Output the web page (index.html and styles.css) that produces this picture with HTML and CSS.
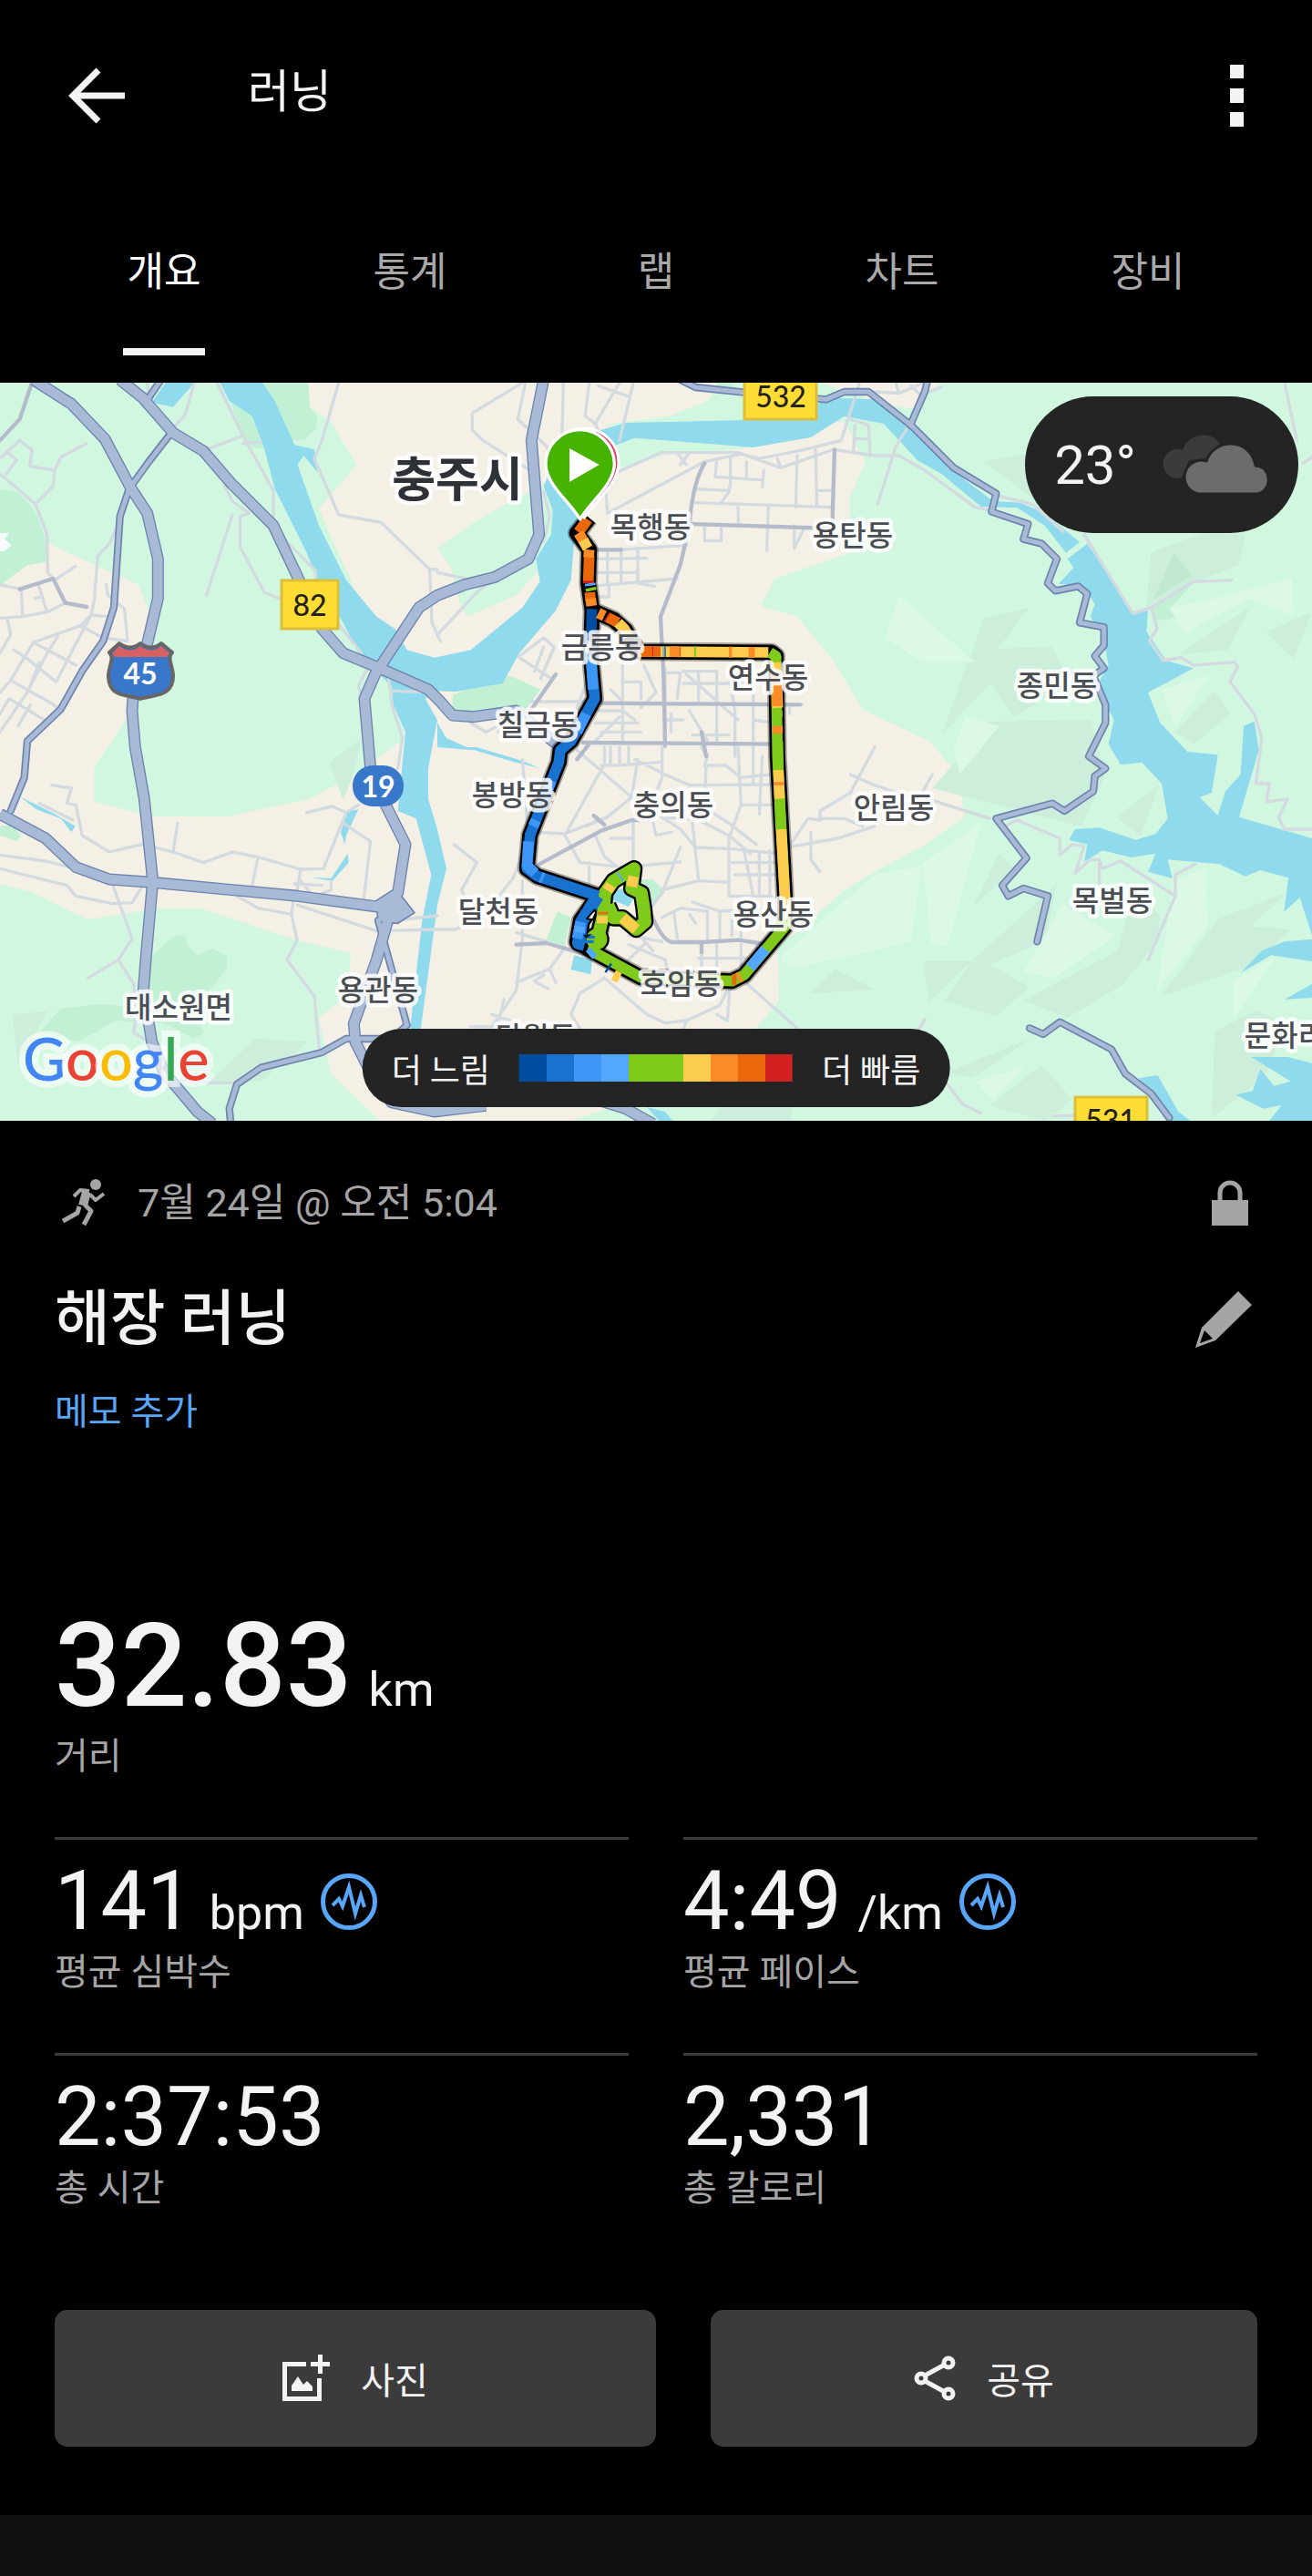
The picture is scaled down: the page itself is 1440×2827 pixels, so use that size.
FILE: index.html
```html
<!DOCTYPE html>
<html lang="ko">
<head>
  <meta charset="UTF-8">
  <title>러닝</title>
  <meta name="viewport" content="width=device-width,initial-scale=1">
  <link rel="stylesheet" href="styles.css">
</head>
<body>
  <header class="topbar">
    <button class="icon-btn" aria-label="뒤로">
      <svg width="62" height="62" viewBox="0 0 62 62" fill="none" stroke="#f3f3f3" stroke-width="7"><path d="M33 3 5 31l28 28M5 31h57"/></svg>
    </button>
    <h1>러닝</h1>
    <button class="icon-btn" aria-label="메뉴">
      <svg width="15" height="68" viewBox="0 0 15 68" fill="#f3f3f3"><path d="M0 0h15v15H0zM0 26h15v16H0zM0 52h15v16H0z"/></svg>
    </button>
  </header>

  <nav class="tabs">
    <a href="#overview" class="tab active">개요</a>
    <a href="#stats" class="tab">통계</a>
    <a href="#laps" class="tab">랩</a>
    <a href="#charts" class="tab">차트</a>
    <a href="#gear" class="tab">장비</a>
  </nav>

  <section class="map">
    <svg class="map-canvas" viewBox="0 0 1440 810" role="img" aria-label="러닝 코스 지도">
      <g transform="scale(.33333)">
        <!-- land -->
        <g fill="#d2f7e1">
          <path d="M0 0H1015L1020 80 1090 130 1175 270 1050 415 1150 640 1300 1000 1335 1170 1160 1295 1020 1370 750 1428H500L310 1380V1265L355 1200 440 1070 490 1000V750L455 665 150 525V590L90 600 0 670z"/>
          <path d="M0 1650 100 1675 290 1767 520 1730H660L960 1830 1155 1878 1145 2020 1050 2090 1090 2275 1250 2430H0z"/>
          <path d="M1440 545 1560 460 1700 380 1800 330 1850 500 1780 610 1700 700 1540 770 1515 730 1485 610z"/>
          <path d="M1455 975 1560 905 1590 945 1550 980z"/>
          <path d="M1980 140 2200 110 2330 60 2370 0H2700L2880 60 2840 130 2600 130 2040 140z"/>
          <path d="M1990 220 2090 182 2480 213 2400 222 2200 235 2050 285z"/>
          <path d="M3090 0H4320V2430H1880L2000 2390 2490 2125 2565 2035 2560 1840 2610 1820 2780 1670 2880 1610 3040 1525 3175 1430 3160 1300 3090 1215 3060 1180 2880 1095 2840 1075 2740 910 2625 770 2505 735 2550 645 2800 560 2797 380 2850 260 2780 130 2880 70 3010 85z"/>
        </g>
        <g fill="#c2f0d5">
          <path d="M865 0H1015L1020 80 1045 110 1040 150 1000 190 960 190 900 60z"/>
          <path d="M760 65 830 110 870 215 830 215 790 150z"/>
          <path d="M0 350 60 360 120 430 155 530 150 590 90 600 0 665z"/>
          <path d="M0 1460 40 1455 70 1490 55 1510 0 1490z"/>
          <path d="M500 1890 540 1850 580 1818 610 1822 615 1850 650 1885 700 1862 750 1890 745 1930 700 1990 640 2030 670 2140 640 2160 540 2110 380 2100 260 2170 130 2140 200 2060 330 2045 480 2060z"/>
          <path d="M1490 1030 1600 980 1680 965 1780 1010 1720 1090 1560 1080 1490 1080z"/>
          <path d="M1835 1740 1880 1760 1860 1855 1798 1835z"/>
          <path d="M2110 1635H2150L2185 1670 2145 1720 2110 1700z"/>
          <path d="M3485 1210 3545 1210 3640 1250 3600 1305 3485 1265z"/>
          <path d="M3790 740 3930 660 3855 740 3870 775 3800 785z"/>
          <path d="M2360 0H2410L2415 20 2360 20z"/>
        </g>
        <path fill="#f8fbfb" d="M0 495 30 495 15 515 38 535 12 555H0z"/>
        <!-- relief -->
        <g fill="#cceedb">
          <path d="M3240 775 3390 740 3285 875 3465 870 3520 990 3340 1100 3260 990 3100 1160z"/>
          <path d="M3790 560 3960 495 4100 500 4080 600 3900 670 3775 740z"/>
          <path d="M3880 895 4115 740 4045 880zM4170 820 4320 755 4260 910zM3870 1150 4000 1015 4050 1090 3930 1190z"/>
          <path d="M3240 260 3375 235 3400 380zM3070 1335 3260 1115 3590 1110 3640 1290 3560 1460 3400 1420z"/>
          <path d="M3675 1430 3820 1320 3755 1495zM3205 1725 3290 1550 3340 1600z"/>
          <path d="M3040 1905H3200L3480 1650 3440 1840 3260 1915 3390 1990 3280 2085 3110 2035 3200 1905 3060 2040z"/>
          <path d="M3370 2035 3680 1870 3730 1690 3820 1750 3815 1830 3700 1980 3515 2090z"/>
          <path d="M3825 2020 4010 1765 4235 1680 4120 1790 4250 1800 4120 1920z"/>
          <path d="M4000 2135 4140 2065 4240 2120 4160 2290 3990 2420zM3120 2270 3400 2155 3200 2290zM3260 2380 3430 2245 3530 2360 3440 2430z"/>
          <path d="M2670 2010 2750 1930 2880 1998zM40 2080 155 2070 60 2250zM690 2300 840 2160 1015 2170 860 2300z"/>
          <path d="M1085 1250 1190 1170 1160 1300 1130 1375z"/>
        </g>
        <g fill="#dcf9e7">
          <path d="M2960 700 3210 920H3040L2915 840zM3850 740 4000 710 4255 645 4260 770 4115 710 3900 825zM3825 1010 3980 965 3870 1130z"/>
          <path d="M3040 1580 3230 1450 3120 1855 3065 1845zM2880 1620 3035 1590 3000 1840 2880 1870zM3370 1940 3500 1720 3675 1820 3470 1960z"/>
          <path d="M3865 1640 3970 1595 3975 1795 3810 2000zM4060 1970 4200 1890 4060 2100zM3210 2300 3380 2250 3270 2360zM3140 1200 3180 1100 3290 1130 3160 1290zM2570 1890 2880 1620 2880 1870 2600 1930z"/>
        </g>
        <path fill="#c2e7d2" d="M3865 560 3925 635 3800 710z"/>
        <path fill="#cdeedd" d="M2340 2430 2390 2360H2620L2600 2430z"/>
        <!-- water -->
        <g fill="#8fdaed">
          <path d="M725 0H865L905 60 970 205 1035 220 1045 295 1000 240 980 270 1050 470 1140 650 1240 770 1300 810 1340 880 1430 905 1550 880 1720 740 1778 655 1765 580 1815 500 1820 420 1790 340 1850 210 1980 155 2060 132 2360 125 2570 120 2740 50 2880 55 2990 140 3130 285 3270 390 3360 395 3440 430 3555 525 3510 560 3440 470 3350 412 3230 408 3100 300 3020 255 2910 135 2780 110 2670 180 2480 213 2090 182 1990 220 1920 330 1890 530 1880 650 1830 750 1710 890 1655 990 1500 1017 1440 1015 1400 1040 1440 1110 1410 1270 1410 1370 1440 1470 1470 1600 1440 1720 1385 2130H1350L1390 1770 1420 1620 1370 1435 1310 1410 1335 1150 1295 1060 1290 1000 1180 890 1130 790 1060 690 1010 560 905 350 870 215 830 110 755 60z"/>
          <path d="M545 0H640L570 80 500 65zM65 1362 180 1420 248 1460 235 1480 200 1435 120 1405zM1145 1410 1180 1405 1140 1490 1135 1520 1122 1480zM1145 1550 1148 1580 1095 1640 1020 1628 1090 1632z"/>
          <path d="M1530 1200H1570L1720 1245 1775 1268 1690 1248zM1440 1120 1470 1170 1560 1210 1440 1200z"/>
          <path d="M1890 1885 1950 1900 1945 1948 1880 1932zM2015 1680 2060 1660 2090 1690 2070 1725 2020 1705z"/>
          <path d="M3515 580 3580 530 3670 660 3730 760 3780 750 3775 820 3840 915 3930 940 3780 1020 3820 1120 3910 1215 4010 1225 3990 1350 3950 1365 4010 1425 4035 1345 4085 1290 4095 1130 4130 1115 4145 1210 4080 1430 4320 1500V1820L4280 1695 4228 1742 4242 1630 4150 1605 4100 1625 4015 1585 3845 1570 3860 1632 3780 1610 3805 1550 3725 1563 3630 1540 3570 1577 3580 1520 3520 1505 3540 1470 3620 1465 3740 1505 3805 1485 3845 1435 3825 1320 3760 1250 3690 1258 3650 1190 3668 1110 3610 1000 3650 930 3630 830 3590 770 3605 730 3570 670 3485 662 3535 610z"/>
          <path d="M4083 1945 4155 1870 4230 1840 4320 1832V1905L4185 1885zM4120 2220H4240L4320 2240V2430H4180L4220 2378 4160 2390 4070 2345 4125 2330 4150 2260 4195 2315 4250 2300zM3750 2290 3812 2280 3880 2400 3920 2430H3840zM4230 2030 4320 1980V2025zM2130 2385 2190 2400 2215 2430H2170z"/>
        </g>
        <!-- local streets -->
        <g class="street">
          <path d="M0 250 65 190 105 220 98 275 180 288 200 245 285 200M180 288 175 340 117 400 155 500 157 625 180 650 248 605M0 300 117 400M20 225 55 255 20 300M0 665 70 680 75 770 155 755 215 725M0 775 75 770M125 660 155 755M115 710 135 705M25 780 35 830 0 890"/>
          <path d="M45 880 85 905 185 985M110 855 265 800 300 765 355 770M110 855 35 980 0 1020M110 855 250 930M265 800 340 840 420 850 410 745 355 700 350 665M300 765 310 720 322 570 360 530 420 390M35 980 160 1050 205 1080M90 1020 150 900 190 835M185 985 265 830 300 765M0 1090 30 1040 145 1110M60 1130 100 1060M130 920 90 1020 0 1150"/>
          <path d="M640 0 610 105 570 150M715 0 800 175 900 355V470M800 175 680 220M800 200 860 195M1115 0 1060 190 1035 250 1115 435 1255 460 1415 615H1440M740 340 765 390 820 430 790 440V540L870 690 930 715M765 435 680 700M485 0 490 60M1415 615 1422 790 1450 850M910 490 1040 620V700L1190 890"/>
          <path d="M1210 940 1180 1000 1200 1050M1280 970 1290 1060 1325 1170 1310 1270M1295 1015 1440 1020M0 1555 150 1575 230 1595M0 1600 220 1655 250 1690 370 1715 435 1712 470 1655M170 1325 235 1335 220 1385 250 1390 270 1490 360 1545 470 1520 570 1545 670 1580 765 1545 850 1562 990 1602 1065 1600 1140 1415 1180 1390M570 1545 585 1450M850 1562 828 1665M990 1602 975 1690M1130 1450 1220 1510 1198 1700M1010 1415 1095 1395 1140 1415M130 1385 240 1440"/>
          <path d="M370 1650 435 1830 390 1900 290 1960M390 1900 440 1980 450 2080 440 2140 500 2175 520 2210M780 1690 850 1730 960 1750 978 1835 945 1900 1035 2020 1052 2200M965 1710 960 1750M980 1720 1240 1805 1440 1800M1300 1770 1440 1755M600 2295 700 2305 770 2305M970 1650 1060 1655M990 1640 1030 1690M1040 1690 1090 1670V1640"/>
          <path d="M1720 0 1555 100V155L1590 190 1740 285M1730 0 1705 120 1800 210 1860 330M1855 0 1850 200M1940 0 1927 110 1960 135 2040 0M1970 10 2070 45M2085 0 2040 190M1960 135 1980 180 2000 420M2000 310 2175 230H2430L2570 280 2745 220 2880 240M2000 430 2320 260 2440 235 2500 250 2650 220 2770 190 2830 0M2230 230 2260 270M2240 270 2270 230"/>
          <path d="M2800 120 2860 140 2865 240M2815 140 2810 230M2820 185H2860M2360 250 2355 310 2510 320M2405 250V330L2400 360 2375 395M2458 260V315M2560 250 2570 280M2625 240 2620 410M2685 220 2690 410M2290 350 2400 355M2290 395 2740 410M2515 290 2510 345M2430 410 2432 470M2530 410 2525 550M2615 470V545L2650 475M2690 355H2740M2320 470V520H2375V480"/>
          <path d="M1970 550H2040L2260 535M1970 580 2130 578M1970 625H2100M1970 668 2230 645M2000 560V660M2045 545V660M2100 545V660L2155 670M1970 705H2005V660M1440 830 1580 680 1680 610 1790 520 1810 440 1790 360M1440 625 1560 650"/>
          <path d="M1710 900 1790 840 1825 870 1780 975M1710 905 1810 970M1760 950 1790 870M1750 1050H1950M1940 960 1890 1100 1840 1170M1550 1120 1600 1150 1640 1130M1640 1150 1680 1080M2050 930V1190M2050 985H2110V1040M2120 930 2160 1020 2110 1070M2190 940V1200M2190 955H2240L2230 1040M2250 950H2360V1180M2250 990H2520M2300 950V1050M2400 960 2420 1080V1230M2260 960 2430 1110M2480 970V1180M2190 1110H2250M2210 1090V1150M2010 1010 2050 1050M1970 1080H2050L2090 1110M1960 1120H2100M1980 1150H2110M1960 1180 2040 1100M2270 1080 2330 1180M2280 1160H2400M2540 1060H2640M2600 1060V1090M2480 1110 2550 1120"/>
          <path d="M1980 1260 2030 1260 2170 1250M1990 1200V1250M2010 1200V1250M2040 1200V1250M2070 1200V1250M1900 1210 2080 1365 2240 1470 2290 1530 2410 1535 2560 1550M2100 1240 2080 1365 2000 1430 1930 1460M1985 1265 1860 1490 1910 1580 2050 1595 2240 1578M2090 1240 2190 1290 2270 1325 2540 1323M2180 1200V1300L2130 1430 2085 1440V1600M1770 1480 1860 1485 2000 1430M1960 1490 1990 1560 2040 1600M2010 1500H2085M1940 1580V1700M2140 1400 2160 1490 2210 1480M2180 1430 2300 1440 2400 1490 2470 1550M2320 1260H2390L2440 1300 2540 1290M2320 1260 2330 1230 2310 1200M2325 1260 2320 1400 2400 1450 2490 1520M2430 1200 2440 1390 2400 1500V1690M2440 1390H2540M2480 1200V1320M2510 1230 2500 1420M2280 1450 2300 1640 2180 1670M2240 1530 2180 1680 2120 1760"/>
          <path d="M2300 1640 2400 1645M2410 1580H2570M2420 1620H2570M2450 1540 2480 1690M2500 1550V1680M2535 1540V1690M2400 1690H2540M2280 1710 2370 1740 2500 1735M2330 1740V1840M2370 1740V1830M2220 1750 2230 1830M2180 1760 2240 1730 2330 1740M2270 1750 2290 1780M2410 1740V1820M2440 1740V1830M2300 1895H2490M2310 1870V1930M2360 1850V1930M2440 1850V1930M2490 1850V1930M2070 1850 2190 1900 2200 1950M2120 1850 2050 1920M2090 1800 2150 1870M2070 1820 2180 1840"/>
          <path d="M1495 1520 1570 1580 1520 1670 1540 1720M1440 1800 1500 1800 1590 1760 1690 1630 1740 1500 1720 1240M1720 1640V1830L1700 2000 1620 2120M1700 1810 1800 1840M1860 1860 1810 1930 1700 1975M1810 1930 1830 1975M1765 1975 1805 1995M1790 1950 1760 1970M1620 2080 1680 2100M1660 2030 1640 2110M1550 2120H1650M1990 1960 1910 2010 1880 2080 1920 2140M1990 1960 2130 2080 2190 2108 2260 2100 2370 2050 2410 1970M2260 2100 2250 2130M2405 1970 2395 2100 2360 2080M2450 1970 2630 2130M2590 1530 2760 1500 2880 1460M2670 1480V1570L2700 1610M2880 1200 2800 1350 2700 1410V1440L2660 1435 2590 1540M2700 1435H2780L2840 1460M2800 1290 2880 1325"/>
          <path d="M2880 30 2960 35 3040 0M2950 0 2960 35M3000 10 3030 40 3100 15M2880 240 2960 240 3040 285 3210 410 3265 420M2990 145 2950 210 2890 400M3280 370 3400 400 3500 490M3570 500 3730 760 3790 740 3930 655 4055 650M3790 740 3810 810 3785 850 3830 915 3890 905 3930 930 4065 920 4075 935 4050 985 4130 1090 4155 1170 4135 1320 4180 1320 4170 1380 4240 1370 4210 1430 4230 1470H4320M4230 0 4270 190M4290 265 4320 245"/>
          <path d="M2880 1325 2980 1360 3070 1375 3260 1435M3070 1290 3030 1360M3300 1465 3350 1440 3490 1500V1555L3530 1520 3570 1525 3540 1615 3590 1570 3620 1570 3630 1600 3690 1575 3870 1690V1620L3935 1585M3620 1570V1650M3870 1690 3780 1900M3045 2095 3020 2140M3120 2310 3170 2375 3230 2405M3470 2415 3600 2410"/>
        </g>
        <g class="avenue">
          <path d="M2320 265Q2280 330 2270 470L2240 600 2175 770 2185 960 2190 1195M2280 465 2740 480 2748 220M1970 1055 2635 1060M1920 1185 2570 1190M1740 1090 1830 960M1960 550H2045"/>
          <path d="M1720 1615 1980 1475 2080 1440H2140M1990 1455 1955 1425M1700 1850 1800 1845 1920 1880M2140 1740Q2180 1840 2215 1842H2310L2430 1835 2500 1845M2310 1842V1875M2310 1150 2325 1230M1900 1240 1940 1190"/>
          <path d="M65 680 175 645 215 725 285 738M0 190 65 120 105 0"/>
        </g>
        <!-- highways: casing first, fill above -->
        <defs>
          <g id="trunk">
            <path d="M110 -10 235 70 345 185 430 345 485 430 520 580V710L480 880 440 1010 435 1080 445 1200 475 1370 503 1640 480 1900 472 2000 500 2170 540 2270 650 2400 700 2440"/>
            <path d="M395 -10 470 50 570 165 670 225 760 330 900 470 985 650 1060 810 1130 890 1250 940 1410 1010 1450 1050 1490 1095 1560 1100 1700 1080 1770 1140 1840 1195"/>
            <path d="M0 1420 150 1500 250 1595 360 1635 500 1645 980 1690 1240 1725 1310 1680 1335 1520 1270 1390 1220 1270 1200 1040 1235 960 1380 740 1440 700 1530 665 1630 640 1740 580 1775 500 1750 190 1790 -10"/>
            <path d="M1280 1760 1240 1900 1165 2110 1170 2170 1220 2270 1290 2370 1430 2400 1600 2380M1900 2340 2060 2390 2150 2440"/>
          </g>
          <g id="primary">
            <path d="M530 -10 490 50M560 170 490 260 425 350 395 440 375 740 340 850 270 950 200 1075 90 1180 80 1300 35 1410"/>
            <path d="M1245 1770 1340 2115 1290 2160H1140L1060 2205 860 2255 780 2310 755 2390 760 2440M3055 -10 3045 30 2997 140"/>
            <path d="M2240 -10 2290 15 2480 35 2720 55 2780 30H2860L3000 140 3140 280 3280 365 3265 425 3385 465 3370 515 3430 530 3480 580 3450 660 3475 685 3550 670 3580 695 3555 790 3635 805V865L3605 900 3635 940 3600 965 3640 1060V1120L3585 1230 3640 1270 3605 1295 3600 1345 3505 1410 3465 1385 3280 1435 3380 1565 3300 1655 3320 1690 3370 1665 3450 1690 3415 1840"/>
            <path d="M3390 2125 3435 2145 3490 2105 3660 2195 3705 2275 3790 2340 3850 2420"/>
          </g>
        </defs>
        <use href="#primary" class="primary-casing"/>
        <use href="#trunk" class="trunk-casing"/>
        <path d="M1240 1720 1310 1675 1365 1745 1310 1780 1245 1775z" fill="#a8bad6" stroke="#6c84ad" stroke-width="5"/>
        <use href="#primary" class="primary"/>
        <use href="#trunk" class="trunk"/>

        <!-- running course, coloured by pace -->
        <defs>
          <path id="course" d="M1940 445 1900 495 1940 550 1937 660 1950 750 1945 900 1958 1040 1880 1180 1845 1210 1840 1250 1745 1490 1735 1600 1770 1625 1970 1690 1912 1770 1900 1840 1950 1872 2110 1958 2410 1970 2450 1950 2585 1790V1700L2560 1230 2555 900 2540 888 2100 885 2060 815 2020 780 1950 750M1950 1872 1970 1825 1985 1760 1990 1680"/>
          <path id="lake-loop" d="M1970 1820 1985 1760 1992 1680 2020 1640 2088 1600 2080 1665 2112 1680 2120 1730 2124 1775 2095 1800 2050 1762 2020 1762 2002 1720"/>
          <path id="south-loop" d="M1968 1690 1915 1775 1905 1845 1925 1850"/>
        </defs>
        <use href="#course" class="course-shadow"/>
        <use href="#course" class="course-shadow dark"/>
        <use href="#lake-loop" class="course-shadow dark wide"/>
        <use href="#south-loop" class="course-shadow dark wide"/>
        <circle cx="1965" cy="1832" r="38" fill="#80ca1c" stroke="#000" stroke-width="7"/>
        <g class="pace">
          <path stroke="#80ca1c" d="M1950 1872 2110 1958 2410 1970 2450 1950 2585 1790V1700L2560 1230 2555 900M1950 1872 1970 1825"/>
          <use href="#lake-loop" stroke="#80ca1c" class="loop"/>
          <path stroke="#1872d0" d="M1945 900 1958 1040 1880 1180 1845 1210 1840 1250 1745 1490 1735 1600 1770 1625 1970 1690"/>
          <use href="#south-loop" stroke="#1872d0" class="loop"/>
          <path stroke="#004c9e" d="M1949 745 1945 900"/>
          <path stroke="#3d96f5" d="M1946 905 1953 1010M1930 1090 1900 1150M1815 1310 1805 1335M1765 1440 1755 1460M1740 1510 1735 1590 1762 1615M1912 1775 1900 1830M1790 1632 1780 1628"/>
          <path stroke="#54a7ff" d="M1910 1790 1908 1810M2520 1865 2470 1925M1955 1872 1940 1885"/>
          <path stroke="#ea670c" d="M1935 450 1905 492M1940 570 1937 655M1942 690 1945 720M2035 790 2000 772"/>
          <path stroke="#fa8b26" d="M1905 495 1922 522M1940 550 1938 575M1945 710 1948 735M1970 758 1990 768"/>
          <path stroke="#fbcc4d" d="M1920 518 1935 545M2035 790 2055 810 2070 835M2100 885 2530 888M2555 920 2561 1070M2563 1275 2567 1370M2572 1470 2585 1700 2586 1740M2050 1762 2095 1800M2020 1950 2040 1960M1983 1755V1780M2086 1625 2080 1660M2000 1672 2012 1654"/>
          <path stroke="#ea670c" d="M2100 885H2175M1985 1742V1750M2410 1965 2425 1965"/>
          <path stroke="#fa8b26" d="M2205 885 2240 886M2400 887H2410M2465 888H2485M2556 955 2558 1065M2560 1130V1155M2565 1315V1325M2430 1960 2440 1955"/>
          <path stroke="#80ca1c" d="M2286 886H2292M2535 888 2555 900 2555 905M2559 1080V1100M2561 1180 2563 1275M2567 1370 2571 1470M1945 675 1947 685M2585 1770 2560 1810"/>
          <path stroke="#d42020" d="M2148 885H2151M2238 885H2240M1938 652V660M1998 770 2001 772"/>
          <path stroke="#54a7ff" d="M1943 660 1944 668M2040 1628 2045 1625M2182 885H2186"/>
          <path stroke="#004c9e" d="M2000 1925 2006 1929M2188 886H2192"/>
          <path stroke="#1872d0" stroke-width="10" d="M1935 1825H1958M1925 1840H1955"/>
        </g>
        <path d="M1932 1765 1958 1735 1962 1745 1952 1768z" fill="#f4f0e5" stroke="#000" stroke-width="6"/>
        <path d="M1920 1818 1950 1815 1930 1830z" fill="#071a33"/>

        <!-- finish pin under start pin -->
        <path d="M1924 445C1894 395 1811 335 1811 263a113 113 0 0 1 226 0c0 72-83 132-113 182z" fill="#e8365d" stroke="#fff" stroke-width="9"/>
        <path d="M1910 450C1880 395 1797 335 1797 268a113 113 0 0 1 226 0c0 67-83 127-113 182z" fill="#45b300" stroke="#fff" stroke-width="10"/>
        <path d="M1875 216 1973 270 1875 327z" fill="#fff"/>
      </g>

      <g class="road-sign">
        <rect x="309" y="217" width="62" height="53"/>
        <rect x="817" y="-12" width="79" height="52"/>
        <rect x="1180" y="784" width="79" height="52"/>
        <text x="340" y="243">82</text>
        <text x="857" y="14">532</text>
        <text x="1219" y="808">531</text>
      </g>
      <path d="M120 296 131 286q12 9 23 0 12 9 23 0l12 10c-8 8 6 20-1 36-6 13-24 11-34 15-10-4-28-2-33-15-7-16 7-28-1-36z" fill="#3877c9" stroke="#666" stroke-width="4"/>
      <path d="M123 297 131 289q12 9 23 0 12 9 23 0l9 8-3 4H126z" fill="#d96060"/>
      <rect x="387" y="420" width="56" height="45" rx="22" fill="#3877c9"/>
      <text class="sign-light" x="154" y="318">45</text>
      <text class="sign-light" x="415" y="442">19</text>

      <g class="place">
        <text x="714" y="156">목행동</text>
        <text x="936" y="165">용탄동</text>
        <text x="660" y="288">금릉동</text>
        <text x="843" y="321">연수동</text>
        <text x="590" y="373">칠금동</text>
        <text x="562" y="450">봉방동</text>
        <text x="739" y="461">충의동</text>
        <text x="981" y="464">안림동</text>
        <text x="547" y="578">달천동</text>
        <text x="849" y="581">용산동</text>
        <text x="747" y="657">호암동</text>
        <text x="415" y="664">용관동</text>
        <text x="196" y="683">대소원면</text>
        <text x="1160" y="330">종민동</text>
        <text x="1221" y="566">목벌동</text>
        <text x="1410" y="714">문화리</text>
        <text x="588" y="716">단월동</text>
        <text x="502" y="102" class="city">충주시</text>
      </g>
      <text class="google" x="25" y="766"><tspan fill="#4285f4">G</tspan><tspan fill="#ea4335">o</tspan><tspan fill="#fbbc05">o</tspan><tspan fill="#4285f4">g</tspan><tspan fill="#34a853">l</tspan><tspan fill="#ea4335">e</tspan></text>
    </svg>

    <div class="weather">
      <span>23°</span>
      <svg width="118" height="66" viewBox="0 0 118 66">
        <path d="M17 48a16 16 0 1 1 6-31C29-2 54-5 64 10L50 26 30 28 22 47z" fill="#3b3b3b"/>
        <path d="M41 65a18.500 18.500 0 1 1 8-36c8-25 48-27 54 5 20 1 18 31 0 31z" fill="#6c6c6c" stroke="#242424" stroke-width="3"/>
      </svg>
    </div>
    <div class="legend">
      <span>더 느림</span>
      <div class="legend-bar"></div>
      <span>더 빠름</span>
    </div>
  </section>

  <main id="overview">
    <div class="row date">
      <svg width="48" height="52" viewBox="0 0 48 52" fill="none" stroke="#a5a5a5" stroke-linejoin="round">
        <circle cx="37" cy="6" r="6" fill="#a5a5a5" stroke="none"/>
        <path d="M13 19 20 12 30 13" stroke-width="4"/>
        <path d="M27 14 23 29" stroke-width="10"/>
        <path d="M31 17 37 23 46 16" stroke-width="4"/>
        <path d="M25 28 32 35 24 50" stroke-width="5"/>
        <path d="M19 30 17 37 1 46" stroke-width="5"/>
      </svg>
      <span>7월 24일 @ 오전 5:04</span>
      <svg class="end lock" width="40" height="50" viewBox="0 0 40 50">
        <path d="M0 22H40V50H0z" fill="#a5a5a5"/>
        <path d="M9 24V14a11 11 0 0 1 22 0V24" fill="none" stroke="#a5a5a5" stroke-width="5"/>
      </svg>
    </div>
    <div class="row title">
      <h2>해장 러닝</h2>
      <button class="icon-btn end" aria-label="수정">
        <svg width="62" height="62" viewBox="0 0 62 62">
          <path fill-rule="evenodd" fill="#a5a5a5" d="M47 0 62 15 22 54 0 62 7 40zM10 43 5 57 19 52z"/>
        </svg>
      </button>
    </div>
    <a href="#memo" class="memo">메모 추가</a>

    <div class="distance">
      <div class="value">32.83 <small>km</small></div>
      <div class="label">거리</div>
    </div>

    <div class="stats">
      <div class="stat">
        <div class="value">141 <small>bpm</small>
          <svg width="62" height="62" viewBox="0 0 62 62" fill="none" stroke="#58a6f8"><circle cx="31" cy="31" r="28.500" stroke-width="5"/><path d="M13 35 20 28 24 36 31 15 38 44 44 24 48 37" stroke-width="4"/></svg>
        </div>
        <div class="label">평균 심박수</div>
      </div>
      <div class="stat">
        <div class="value">4:49 <small>/km</small>
          <svg width="62" height="62" viewBox="0 0 62 62" fill="none" stroke="#58a6f8"><circle cx="31" cy="31" r="28.500" stroke-width="5"/><path d="M13 35 20 28 24 36 31 15 38 44 44 24 48 37" stroke-width="4"/></svg>
        </div>
        <div class="label">평균 페이스</div>
      </div>
      <div class="stat">
        <div class="value">2:37:53</div>
        <div class="label">총 시간</div>
      </div>
      <div class="stat">
        <div class="value">2,331</div>
        <div class="label">총 칼로리</div>
      </div>
    </div>

    <div class="actions">
      <button>
        <svg width="52" height="52" viewBox="0 0 52 52" fill="#f3f3f3">
          <path d="M26 8V13H5V46H38V26H43V51H0V8z"/>
          <path d="M39 0H44V8H52V13H44V21H39V13H31V8H39z"/>
          <path d="M10 40V34L17 24 23 33 27 29 33 35V40z"/>
        </svg>
        사진
      </button>
      <button>
        <svg width="46" height="50" viewBox="0 0 46 50" fill="none" stroke="#f3f3f3" stroke-width="5">
          <path d="M12 22 34 10M12 28 34 40"/>
          <circle cx="8" cy="25" r="5"/><circle cx="38" cy="8" r="5"/><circle cx="38" cy="42" r="5"/>
        </svg>
        공유
      </button>
    </div>
  </main>
  <footer></footer>
</body>
</html>
```
FILE: styles.css
```css
* { box-sizing: border-box; }
body { margin: 0; background: #101010; color: #f3f3f3; font-family: Roboto, 'Noto Sans CJK KR', sans-serif; }
h1, h2 { margin: 0; font-weight: 400; }
a { color: inherit; text-decoration: none; }
button { font: inherit; color: inherit; border: none; cursor: pointer; }
svg { display: block; flex: none; }
.icon-btn { background: none; padding: 0; }

.topbar { display: flex; align-items: center; height: 210px; padding: 0 75px; background: #000; }
.topbar h1 { flex: 1; margin-left: 135px; padding-bottom: 8px; font-size: 50px; line-height: 60px; }

.tabs { display: flex; height: 210px; padding: 0 45px; background: #000; }
.tab { position: relative; flex: 1; padding-top: 59px; font-size: 44px; line-height: 60px; text-align: center; color: #a9a9a9; }
.tab.active { color: #fff; }
.tab.active::after { content: ''; position: absolute; left: 50%; bottom: 30px; width: 90px; height: 8px; margin-left: -45px; background: #f3f3f3; }

.map { position: relative; overflow: hidden; background: #f4f0e5; }
.map-canvas { width: 100%; height: auto; }
.map path, .map use { stroke-linejoin: round; }
.street { fill: none; stroke: #d3dae0; stroke-width: 10; stroke-linecap: round; }
.avenue { fill: none; stroke: #b4bccb; stroke-width: 13; stroke-linecap: round; }
.trunk-casing { fill: none; stroke: #6c84ad; stroke-width: 39; }
.trunk { fill: none; stroke: #a8bad6; stroke-width: 31; }
.primary-casing { fill: none; stroke: #6c84ad; stroke-width: 25; stroke-linecap: round; }
.primary { fill: none; stroke: #a8bad6; stroke-width: 15; stroke-linecap: round; }
.course-shadow { fill: none; stroke: #0005; stroke-width: 62; }
.course-shadow.dark { stroke: #000; stroke-width: 51; }
.course-shadow.wide { stroke-width: 56; }
.pace { fill: none; stroke-width: 35; }
.pace .loop { stroke-width: 42; }
.road-sign rect { fill: #ffdd35; stroke: #dcbf38; stroke-width: 3; }
.road-sign text, .sign-light { font: 500 32px Lato, sans-serif; text-anchor: middle; dominant-baseline: central; }
.road-sign text { fill: #222; }
.sign-light { fill: #fff; font-weight: 700; }
.place text { font: 500 32px 'Noto Sans CJK KR', sans-serif; text-anchor: middle; dominant-baseline: central; fill: #4a4e53; stroke: #fffd; stroke-width: 9; stroke-linejoin: round; paint-order: stroke; }
.place .city { font-size: 52px; font-weight: 700; fill: #2e3135; }
.google { font: 500 65px Lato, sans-serif; stroke: #fff9; stroke-width: 14; paint-order: stroke; }

.weather { position: absolute; top: 15px; right: 15px; display: flex; align-items: center; gap: 28px; height: 150px; padding: 0 32px; border-radius: 75px; background: #242424; font-size: 60px; }
.legend { position: absolute; left: 50%; bottom: 15px; transform: translateX(-50%); display: flex; align-items: center; gap: 32px; height: 86px; padding: 0 32px; border-radius: 43px; background: #242424; font-size: 36px; white-space: nowrap; }
.legend-bar { width: 300px; height: 30px; background: linear-gradient(90deg, #004c9e 10%, #1872d0 10% 20%, #3d96f5 20% 30%, #54a7ff 30% 40%, #80ca1c 40% 60%, #fbcc4d 60% 70%, #fa8b26 70% 80%, #ea670c 80% 90%, #d42020 90%); }

main { padding: 60px 60px 75px; background: #000; }
.row { display: flex; align-items: center; }
.end { margin-left: auto; }
.date { height: 60px; padding: 0 10px 0 8px; gap: 35px; font-size: 43px; line-height: 56px; color: #a5a5a5; }
.title { height: 84px; margin: 56px 0 30px; padding-right: 6px; }
.title h2 { font-size: 66px; line-height: 84px; font-weight: 500; }
.memo { display: block; width: max-content; font-size: 40px; line-height: 60px; color: #58a6f8; }

.value { display: flex; align-items: baseline; gap: 18px; font-size: 90px; line-height: 96px; }
.value small { font-size: 52px; line-height: 52px; }
.value svg { align-self: center; }
.label { font-size: 40px; line-height: 60px; color: #a5a5a5; }
.distance { margin-top: 184px; }
.distance .value { margin-bottom: 6px; font-size: 128px; line-height: 128px; font-weight: 500; }
.distance small { font-weight: 400; }

.stats { display: grid; grid-template-columns: 1fr 1fr; gap: 58px 60px; margin-top: 58px; }
.stat { padding-top: 20px; border-top: 3px solid #3b3b3b; }

.actions { display: grid; grid-template-columns: 11fr 10fr; gap: 60px; margin-top: 103px; }
.actions button { display: flex; align-items: center; justify-content: center; gap: 34px; height: 150px; padding: 0; border-radius: 14px; background: #3b3b3b; font-size: 40px; }
footer { height: 66px; }
```
